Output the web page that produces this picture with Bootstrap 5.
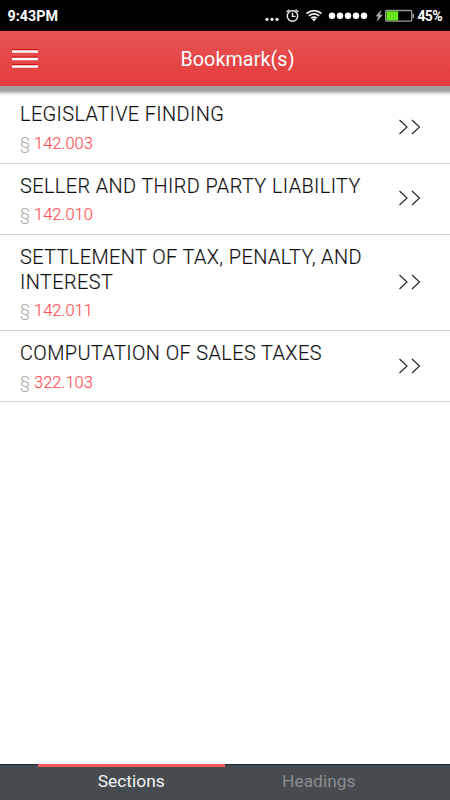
<!DOCTYPE html>
<html lang="en">
<head>
<meta charset="utf-8">
<meta name="viewport" content="width=device-width, initial-scale=1">
<title>Bookmark(s)</title>
<link href="https://cdn.jsdelivr.net/npm/bootstrap@5.3.0/dist/css/bootstrap.min.css" rel="stylesheet">
<style>
body{font-family:Roboto,"Liberation Sans",sans-serif;height:100vh;overflow:hidden}
svg{display:block;flex:none}
.status{height:31px;background:#000;color:#fff;font-weight:700;font-size:14.3px;line-height:31px;padding:1px 8px 0 7.5px}
.status .clock{letter-spacing:.05px}
.status .pct{font-size:14px;letter-spacing:-.6px}
.topbar{height:55px;background:linear-gradient(#e75454,#e53b3c);color:#fff;padding:1px 0 0;display:grid;grid-template-columns:62px 1fr 37px;align-items:center}
.topbar h1{font-size:19.7px;font-weight:400;letter-spacing:.1px;line-height:24px;padding-top:2px}
.menu-btn{padding:0 0 0 12px;border:0;background:none}
.edge{height:10px;background:linear-gradient(#9f9f9f 0,#a1a1a1 45%,#bdbdbd 60%,#e8e8e8 80%,#fff)}
.list-area{margin-top:-3.8px}
.entry{height:71.3px;border-bottom:1px solid #d4d4d4;padding:10.2px 28px 0 20px;color:#111}
.entry.tall{height:96.4px}
.entry svg{margin-bottom:10.6px}
.entry-title{font-size:19.9px;font-weight:300;line-height:25px;letter-spacing:.4px;margin:0;white-space:nowrap;-webkit-text-stroke:.15px #111}
.entry-code{font-size:16.5px;font-weight:300;line-height:23px;color:#ff4c50;margin-top:4.2px;-webkit-text-stroke:.12px #ff4c50}
.entry-code span{color:#aaa;-webkit-text-stroke:.1px #aaa}
.tabs{height:36px;background:linear-gradient(#1f2c33 1px,#464b4f 1px);padding:0 37.5px;font-size:17.4px}
.tab-item{border-top:3px solid transparent;color:#8a8d90;line-height:29px;text-decoration:none}
.tab-item.on{border-color:#ff5b5c;color:#f4f4f4}
</style>
</head>
<body class="d-flex flex-column bg-white">
<div class="status d-flex justify-content-between">
  <span class="clock">9:43PM</span>
  <div class="d-flex">
    <svg width="152" height="30" viewBox="0 0 152 30">
      <g fill="#eee"><circle cx="2" cy="18.3" r="1.6"/><circle cx="7" cy="18.3" r="1.6"/><circle cx="12" cy="18.3" r="1.6"/></g>
      <g fill="none" stroke="#eee" stroke-width="1.4"><circle cx="27.5" cy="15" r="5.2"/><path d="M27.5 11.7V15.4H30.5M21.5 11L24.5 8.7M30.5 8.7L33.5 11"/></g>
      <g fill="none" stroke="#eee" stroke-width="1.6"><path d="M41.5 12.5Q49 6.7 56.5 12.5M43.7 14.9Q49 10.9 54.3 14.9M46 17.2Q49 15 52 17.2"/></g><path d="M46.8 18Q49 16.7 51.2 18L49 20.5Z" fill="#eee"/>
      <g fill="#fff"><circle cx="67" cy="14.7" r="3.2"/><circle cx="75" cy="14.7" r="3.2"/><circle cx="83" cy="14.7" r="3.2"/><circle cx="91" cy="14.7" r="3.2"/><circle cx="99" cy="14.7" r="3.2"/></g>
      <path d="M116.5 8.5L110.5 15.5H113.3L111.5 21L118 13.7H115Z" fill="#aaa"/>
      <rect x="120.7" y="9.5" width="26" height="10.7" rx="1" fill="none" stroke="#999" stroke-width="1.3"/><rect x="121.5" y="10.3" width="11.7" height="9.2" fill="#68e61c"/><path d="M147.5 13H149V17H147.5Z" fill="#aaa"/>
    </svg>
    <span class="pct">45%</span>
  </div>
</div>
<header class="topbar">
  <button class="menu-btn" aria-label="Menu"><svg width="26" height="20" viewBox="0 0 26 20"><path d="M0 1.5H26M0 9H26M0 16.5H26" stroke="#d51014" stroke-width="3"/><path d="M0 2.5H26M0 10H26M0 17.5H26" stroke="#fff" stroke-width="2.6"/></svg></button>
  <h1 class="m-0 text-center">Bookmark(s)</h1>
</header>
<div class="edge"></div>
<main class="list-area flex-grow-1">
  <div class="entry d-flex justify-content-between">
    <div><h2 class="entry-title">LEGISLATIVE FINDING</h2><div class="entry-code"><span>§</span> 142.003</div></div>
    <svg class="align-self-center" width="24" height="16" viewBox="0 0 24 16"><path d="M1.5 1L9 8L1.5 15M14 1L21.5 8L14 15" fill="none" stroke="#222" stroke-width="1.1"/></svg>
  </div>
  <div class="entry d-flex justify-content-between">
    <div><h2 class="entry-title">SELLER AND THIRD PARTY LIABILITY</h2><div class="entry-code"><span>§</span> 142.010</div></div>
    <svg class="align-self-center" width="24" height="16" viewBox="0 0 24 16"><path d="M1.5 1L9 8L1.5 15M14 1L21.5 8L14 15" fill="none" stroke="#222" stroke-width="1.1"/></svg>
  </div>
  <div class="entry tall d-flex justify-content-between">
    <div><h2 class="entry-title">SETTLEMENT OF TAX, PENALTY, AND<br>INTEREST</h2><div class="entry-code"><span>§</span> 142.011</div></div>
    <svg class="align-self-center" width="24" height="16" viewBox="0 0 24 16"><path d="M1.5 1L9 8L1.5 15M14 1L21.5 8L14 15" fill="none" stroke="#222" stroke-width="1.1"/></svg>
  </div>
  <div class="entry d-flex justify-content-between">
    <div><h2 class="entry-title">COMPUTATION OF SALES TAXES</h2><div class="entry-code"><span>§</span> 322.103</div></div>
    <svg class="align-self-center" width="24" height="16" viewBox="0 0 24 16"><path d="M1.5 1L9 8L1.5 15M14 1L21.5 8L14 15" fill="none" stroke="#222" stroke-width="1.1"/></svg>
  </div>
</main>
<nav class="tabs d-flex text-center">
  <a class="tab-item on w-50">Sections</a>
  <a class="tab-item w-50">Headings</a>
</nav>
<script src="https://cdn.jsdelivr.net/npm/bootstrap@5.3.0/dist/js/bootstrap.bundle.min.js"></script>
</body>
</html>
